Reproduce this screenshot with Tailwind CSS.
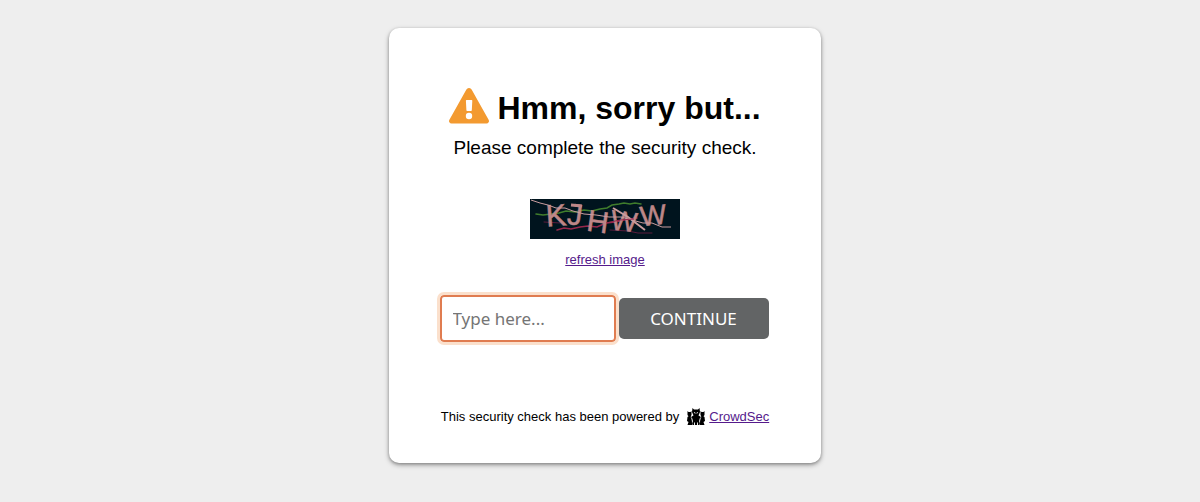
<!DOCTYPE html>
<html lang="en">
<head>
  <meta charset="UTF-8" />
  <title>CrowdSec Captcha</title>
  <meta name="viewport" content="width=device-width, initial-scale=1.0"/>
  <script src="https://cdn.jsdelivr.net/npm/@tailwindcss/browser@4"></script>
</head>
<body class="bg-[#eeeeee] min-h-screen font-['Liberation_Sans',Arial,sans-serif] text-black">
  <div class="flex flex-col items-center pt-7 pb-9 pl-2.5">
    <main class="w-full max-w-[432px] bg-white rounded-[10px] shadow-[0_1px_3px_rgba(0,0,0,0.2),0_2px_5px_rgba(0,0,0,0.35)] px-12 pt-14 pb-9 text-center">
      <h1 class="flex items-center justify-center gap-2 h-12 text-[32px] leading-12 font-bold">
        <svg class="w-10 h-10" viewBox="0 0 40 40" aria-hidden="true">
          <path fill="#f39a30" d="M17.4 1.5a3 3 0 0 1 5.2 0l17 30.2a2.500 2.500 0 0 1-2.200 3.800H2.600a2.500 2.500 0 0 1-2.200-3.800z"/>
          <path fill="#fff" d="M17.600 12h5a.700.700 0 0 1 .700.800l-.500 9.400a.700.700 0 0 1-.700.700h-4a.700.700 0 0 1-.700-.700l-.500-9.400a.700.700 0 0 1 .700-.800z"/>
          <circle cx="20" cy="28" r="3.200" fill="#fff"/>
        </svg>
        Hmm, sorry but...
      </h1>
      <p class="mt-1 text-[19px] leading-6">Please complete the security check.</p>

      <form class="mt-[39px]" onsubmit="return false">
        <svg class="block mx-auto w-[150px] h-10" viewBox="0 0 150 40" role="img" aria-label="captcha image">
          <rect width="150" height="40" fill="#00141e"/>
          <g fill="none" stroke-linecap="round">
            <path stroke="#3f7d2c" stroke-width="1.500" d="M6 15l7 1 8-1 8-1 7-2 9 1 9-2 8 1 8-2 7-1 5-3 7-1 5-1 6 1 5-1 6 1"/>
            <path stroke="#96284c" stroke-width="1.500" d="M27 31l7-2 7 1 9-2 8-1 9 1 9-4 9-1 9-2 13-2"/>
            <path stroke="#5b1c3c" d="M14 23l16 1M80 31l18 1 10 2 14 0"/>
          </g>
          <g fill="#bd8788" stroke="#bd8788" stroke-width=".500" font-family="Liberation Sans, Arial, sans-serif" text-anchor="middle">
            <text x="26" y="27" font-size="31" transform="rotate(-4 26 16)">K</text>
            <text x="45" y="26" font-size="30" transform="rotate(8 45 16)">J</text>
            <text x="68" y="33" font-size="30" transform="rotate(8 68 22)">H</text>
            <text x="94" y="32" font-size="28" transform="rotate(7 94 22)">W</text>
            <text x="123" y="26" font-size="28" transform="rotate(-6 123 16)">W</text>
          </g>
          <g fill="none" stroke="#c99c9e">
            <path stroke="#bd8788" stroke-width="3" d="M41 6l11 1"/>
            <path d="M1 1l9 3 8 2 8 3 9 0 8 3 11 3 12 1 13 2 12 0 11 3 11 3 9 0 10 4 9 0"/>
            <path stroke-width="2" d="M83 9l15 9 17 13"/>
            <path stroke="#96284c" d="M76 24l14-3 14-1"/>
          </g>
        </svg>
        <a href="#" class="block w-fit mx-auto mt-[13px] text-[13px] leading-4 text-[#551a8b] underline">refresh image</a>

        <div class="mt-[27px] pr-0.5 flex items-center justify-center gap-[3px] font-['Noto_Sans','Open_Sans',sans-serif] text-[17px]">
          <input type="text" aria-label="Captcha answer" placeholder="Type here..." class="w-44 h-[47px] px-[11px] rounded-[4px] border-2 border-[#e07c50] bg-white outline-3 outline-[#fbe0cc] placeholder:text-[#757575]"/>
          <button type="submit" class="w-[150px] h-[41px] rounded-[5px] bg-[#626465] text-white">CONTINUE</button>
        </div>
      </form>

      <p class="mt-[65px] flex items-center justify-center text-[13px] leading-5">
        This security check has been powered by
        <svg class="ml-2 mr-1 w-[18px] h-[18px]" viewBox="0 0 18 18" aria-hidden="true">
          <!-- centre guard, then the two at its sides -->
          <path d="M5.500 0L7 1.500h4L12.500 0 13 4l-1.500 3.500L14 9l-1.500 8h-7L4 9l2.500-1.500L5 4z"/>
          <path d="M.5 3l1 1h2l1-1v4l-.7 1.200L5 13v4H.500l1-3L0 13l.5-4 1-.800L.500 7zM17.500 3l-1 1h-2l-1-1v4l.700 1.200L13 13v4h4.500l-1-3L18 13l-.500-4-1-.800 1-1.200z"/>
          <path fill="none" stroke="#fff" stroke-width=".900" d="M7 4.500l1.500.700M11 4.500l-1.500.700M4.200 9.500c1 1.500 1.400 3 1.200 5M13.800 9.500c-1 1.500-1.400 3-1.200 5M7.500 17v-2.500M10.500 17v-2.500"/>
        </svg>
        <a href="#" class="text-[#551a8b] underline">CrowdSec</a>
      </p>
    </main>
  </div>
</body>
</html>
